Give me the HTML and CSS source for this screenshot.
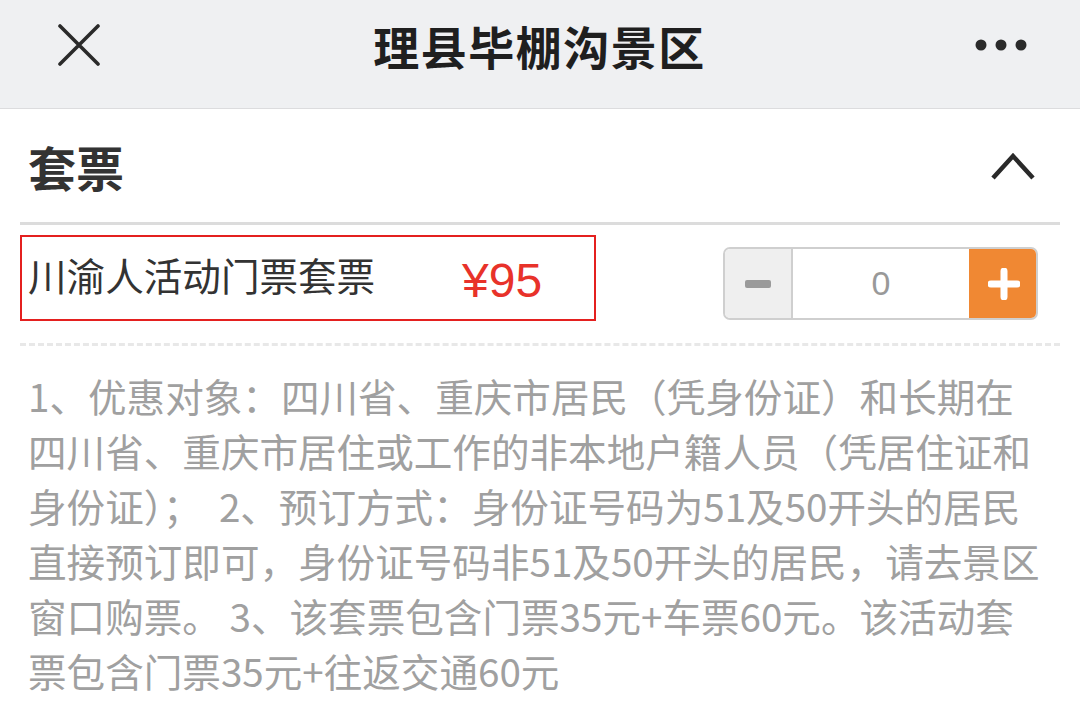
FILE: index.html
```html
<!DOCTYPE html>
<html lang="zh-CN">
<head>
<meta charset="utf-8">
<link rel="stylesheet" href="styles.css">
</head>
<body>
<header class="topbar">
  <svg class="icon-close" width="42" height="42" viewBox="0 0 42 42"><path d="M2 2 L40 40 M40 2 L2 40" stroke="#2a2a2a" stroke-width="3.6" fill="none" stroke-linecap="round"/></svg>
  <h1 class="title">理县毕棚沟景区</h1>
  <svg class="icon-more" width="52" height="14" viewBox="0 0 52 14"><circle cx="6" cy="7" r="5.5" fill="#2a2a2a"/><circle cx="26" cy="7" r="5.5" fill="#2a2a2a"/><circle cx="46" cy="7" r="5.5" fill="#2a2a2a"/></svg>
</header>
<section class="group">
  <div class="group-head">
    <h2 class="group-title">套票</h2>
    <svg class="icon-chevron" width="46" height="30" viewBox="0 0 46 30"><path d="M3 27 L23 5 L43 27" stroke="#2a2a2a" stroke-width="4.5" fill="none" stroke-linejoin="miter"/></svg>
  </div>
  <div class="divider"></div>
  <div class="ticket-row">
    <div class="ticket-box">
      <span class="ticket-name">川渝人活动门票套票</span>
      <span class="ticket-price">¥95</span>
    </div>
    <div class="stepper">
      <div class="step-btn minus"><span class="minus-bar"></span></div>
      <div class="step-val">0</div>
      <div class="step-btn plus">
        <svg width="32" height="32" viewBox="0 0 32 32"><path d="M16 3 V29 M3 16 H29" stroke="#fff" stroke-width="7" stroke-linecap="round"/></svg>
      </div>
    </div>
  </div>
  <div class="dashed"></div>
  <p class="desc">1、优惠对象：四川省、重庆市居民（凭身份证）和长期在<br>四川省、重庆市居住或工作的非本地户籍人员（凭居住证和<br>身份证）；&nbsp; 2、预订方式：身份证号码为51及50开头的居民<br>直接预订即可，身份证号码非51及50开头的居民，请去景区<br>窗口购票。 3、该套票包含门票35元+车票60元。该活动套<br>票包含门票35元+往返交通60元</p>
</section>
</body>
</html>
```

FILE: styles.css
```css
* { box-sizing: border-box; }
html, body { margin: 0; padding: 0; background: #fff; }
body {
  width: 1080px;
  height: 705px;
  overflow: hidden;
  font-family: "Noto Sans CJK SC", "Noto Sans", sans-serif;
}
.topbar {
  height: 109px;
  background: #eff0f2;
  border-bottom: 1px solid #dcdcde;
  display: flex;
  align-items: center;
  padding: 0 53px 18px 58px;
}
.icon-close { display: block; flex: none; }
.title {
  flex: 1;
  margin: 0;
  text-align: center;
  font-size: 46px;
  font-weight: 700;
  color: #1f1f1f;
  letter-spacing: 1.5px;
  padding-left: 4px;
}
.icon-more { display: block; flex: none; }
.group { padding: 0 20px; }
.group-head {
  height: 113px;
  display: flex;
  align-items: center;
  justify-content: space-between;
  padding: 0 24px 0 8px;
}
.group-title {
  margin: 0;
  font-size: 48px;
  font-weight: 700;
  color: #333;
  line-height: 1;
}
.icon-chevron { display: block; }
.divider { height: 3px; background: #dcdcdc; }
.ticket-row {
  display: flex;
  justify-content: space-between;
  align-items: flex-start;
  padding: 10px 22px 0 0;
  height: 118px;
}
.ticket-box {
  width: 576px;
  height: 86px;
  border: 2px solid #e4201f;
  display: flex;
  align-items: center;
  padding: 0 0 8px 6px;
}
.ticket-name {
  font-size: 38.6px;
  color: #333;
  width: 434px;
  line-height: 1;
}
.ticket-price {
  font-family: "Liberation Sans", Arial, sans-serif;
  font-size: 48px;
  color: #e8322a;
  padding-top: 14px;
  line-height: 1;
}
.stepper {
  margin-top: 12px;
  display: flex;
  height: 73px;
  width: 315px;
  border: 2px solid #cfcfcf;
  border-radius: 7px;
  overflow: hidden;
}
.step-btn {
  width: 68px;
  display: flex;
  align-items: center;
  justify-content: center;
}
.minus { background: #efefef; border-right: 2px solid #cfcfcf; }
.minus-bar {
  width: 26px;
  height: 8px;
  border-radius: 2px;
  background: #9a9a9a;
}
.step-val {
  flex: 1;
  display: flex;
  align-items: center;
  justify-content: center;
  font-family: "Liberation Sans", Arial, sans-serif;
  font-size: 34px;
  color: #999;
  background: #fff;
}
.plus { background: #f08833; width: 69px; margin: -2px -2px -2px 0; height: 73px; }
.dashed {
  height: 0;
  border-top: 3px dashed #e8e8e8;
}
.desc {
  margin: 0;
  padding: 22px 0 0 8px;
  font-size: 38.6px;
  line-height: 55px;
  color: #a0a0a0;
  white-space: nowrap;
}
```
